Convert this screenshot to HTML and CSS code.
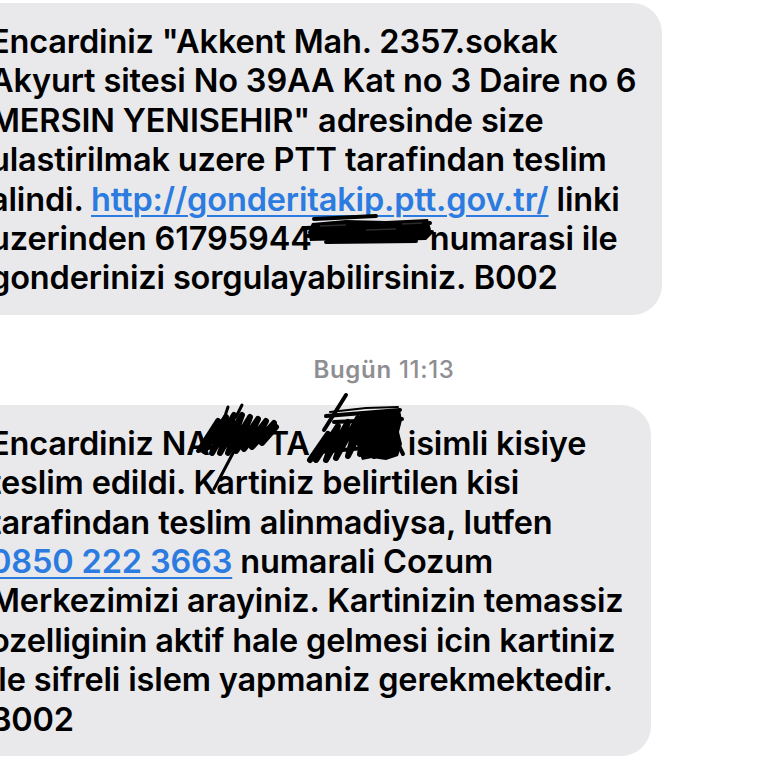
FILE: index.html
```html
<!DOCTYPE html>
<html lang="tr">
<head>
<meta charset="utf-8">
<title>Mesajlar</title>
<link rel="stylesheet" href="styles.css">
</head>
<body>
<div class="thread">
  <div class="bubble b1">
    <p class="msg">Encardiniz "Akkent Mah. 2357.sokak<br>Akyurt sitesi No 39AA Kat no 3 Daire no 6<br>MERSIN YENISEHIR" adresinde size<br>ulastirilmak uzere PTT tarafindan teslim<br>alindi. <a class="link" href="#">http://gonderitakip.ptt.gov.tr/</a> linki<br>uzerinden 61795944<span class="redact r1"><svg viewBox="0 0 128 30" width="128" height="30"><path d="M6,9 L40,6 L80,7 L122,5 L124,12 L126,20 L120,26 L80,27 L40,26 L4,27 L2,18 Z" fill="#000"/><path d="M0,14 L124,9 M2,22 L126,18 M8,5 L70,2 M20,28 L110,27" fill="none" stroke="#000" stroke-width="4" stroke-linecap="round"/><path d="M14,12 L40,11 M60,16 L90,15 M96,10 L116,9" fill="none" stroke="#2a2a2a" stroke-width="1.5"/></svg></span>numarasi ile<br>gonderinizi sorgulayabilirsiniz. B002</p>
  </div>
  <div class="stamp"><span class="day">Bugün</span> 11:13</div>
  <div class="bubble b2">
    <p class="msg">Encardiniz NA<span class="redact r2"><svg viewBox="0 0 80 90" width="80" height="90"><path d="M2,48 L20,20 L6,50 L28,16 L14,52 L36,14 L22,52 L44,14 L30,52 L52,16 L38,50 L60,18 L46,48 L68,20 L54,46 L76,22 L64,42 L78,26" fill="none" stroke="#000" stroke-width="6" stroke-linecap="round" stroke-linejoin="round"/><path d="M30,6 L26,18 M44,4 L38,16" fill="none" stroke="#000" stroke-width="3" stroke-linecap="round"/><path d="M52,20 L16,88" fill="none" stroke="#000" stroke-width="3" stroke-linecap="round"/><path d="M0,50 L34,40 M14,36 L70,28" fill="none" stroke="#000" stroke-width="4" stroke-linecap="round"/></svg></span>TA<span class="redact r3"><svg viewBox="0 0 96 72" width="96" height="72"><path d="M38,3 L16,38" fill="none" stroke="#000" stroke-width="4" stroke-linecap="round"/><path d="M52,22 L70,19 L92,18 L94,28 L91,40 L94,52 L90,64 L78,68 L64,66 L54,68 L48,50 L50,36 Z" fill="#000"/><path d="M2,68 L20,42 L8,68 L30,34 L18,68 L40,30 L28,66 L50,26 L40,64 L58,28 L52,62 L74,26 L66,64 L88,26" fill="none" stroke="#000" stroke-width="6" stroke-linecap="round" stroke-linejoin="round"/><path d="M18,24 L92,18 M26,30 L94,27 M12,60 L56,56 M84,40 L95,62" fill="none" stroke="#000" stroke-width="4" stroke-linecap="round"/><path d="M22,20 L58,16 L90,15" fill="none" stroke="#000" stroke-width="2" stroke-linecap="round"/></svg></span> isimli kisiye<br>teslim edildi. Kartiniz belirtilen kisi<br>tarafindan teslim alinmadiysa, lutfen<br><a class="link" href="#">0850 222 3663</a> numarali Cozum<br>Merkezimizi arayiniz. Kartinizin temassiz<br>ozelliginin aktif hale gelmesi icin kartiniz<br>ile sifreli islem yapmaniz gerekmektedir.<br>B002</p>
  </div>
</div>
</body>
</html>
```
FILE: styles.css
```css
html, body {
  margin: 0;
  padding: 0;
  background: #ffffff;
}
body {
  width: 768px;
  height: 768px;
  overflow: hidden;
  font-family: Inter, "Noto Sans", "DejaVu Sans", sans-serif;
  color: #000;
}
.thread {
  display: flex;
  flex-direction: column;
  padding-top: 3px;
}
.bubble {
  background: #e9e9eb;
  border-radius: 30px;
  box-sizing: border-box;
  margin-left: -40px;
  padding: 19px 30px 17px 30px;
}
.b1 { width: 702px; }
.b2 { width: 691px; }
.msg {
  margin: 0;
  font-size: 32.5px;
  line-height: 39.4px;
  font-weight: 560;
  white-space: nowrap;
  letter-spacing: -0.15px;
}
.link {
  color: #2c7be0;
  text-decoration: underline;
  text-decoration-thickness: 2px;
  text-underline-offset: 4px;
}
.redact {
  display: inline-block;
  position: relative;
  height: 0;
  vertical-align: baseline;
}
.redact svg {
  position: absolute;
  overflow: visible;
}
.r1 { width: 118px; }
.r1 svg { left: -6px; top: -36px; }
.r2 { width: 58px; }
.r2 svg { left: -12px; top: -54px; }
.r3 { width: 90px; }
.r3 svg { left: -2px; top: -63px; }
.stamp {
  margin-top: 41px;
  margin-bottom: 21px;
  text-align: center;
  font-size: 24px;
  line-height: 28px;
  letter-spacing: 0.7px;
  color: #8e8e93;
  font-weight: 500;
}
.day { font-weight: 600; }
```
